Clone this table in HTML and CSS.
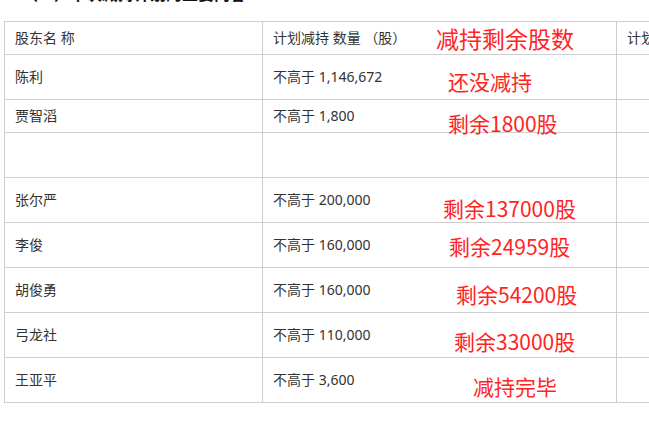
FILE: index.html
```html
<!DOCTYPE html>
<html lang="zh-CN">
<head>
<meta charset="utf-8">
<title>减持计划</title>
<link rel="stylesheet" href="styles.css">
</head>
<body>
<div class="page">
  <div class="title">（一）本次减持计划的主要内容</div>
  <table class="grid">
    <colgroup>
      <col class="c-name">
      <col class="c-amt">
      <col class="c-more">
    </colgroup>
    <tr class="row-head">
      <td>股东名 称</td>
      <td class="amt">计划减持 数量 （股）<span class="note note-big n-head">减持剩余股数</span></td>
      <td>计划减持期间</td>
    </tr>
    <tr class="row">
      <td>陈利</td>
      <td class="amt">不高于 1,146,672<span class="note n1">还没减持</span></td>
      <td></td>
    </tr>
    <tr class="row-short">
      <td>贾智滔</td>
      <td class="amt">不高于 1,800<span class="note n2">剩余1800股</span></td>
      <td></td>
    </tr>
    <tr class="row">
      <td></td>
      <td></td>
      <td></td>
    </tr>
    <tr class="row">
      <td>张尔严</td>
      <td class="amt">不高于 200,000<span class="note n4">剩余137000股</span></td>
      <td></td>
    </tr>
    <tr class="row">
      <td>李俊</td>
      <td class="amt">不高于 160,000<span class="note n5">剩余24959股</span></td>
      <td></td>
    </tr>
    <tr class="row">
      <td>胡俊勇</td>
      <td class="amt">不高于 160,000<span class="note n6">剩余54200股</span></td>
      <td></td>
    </tr>
    <tr class="row">
      <td>弓龙社</td>
      <td class="amt">不高于 110,000<span class="note n7">剩余33000股</span></td>
      <td></td>
    </tr>
    <tr class="row">
      <td>王亚平</td>
      <td class="amt">不高于 3,600<span class="note n8">减持完毕</span></td>
      <td></td>
    </tr>
  </table>
</div>
</body>
</html>
```

FILE: styles.css
```css
html, body {
  margin: 0;
  padding: 0;
  background: #ffffff;
  overflow: hidden;
}

.page {
  width: 720px;
  padding-left: 4px;
  font-family: "Noto Sans", "Noto Sans CJK SC", sans-serif;
  color: #333333;
}

.title {
  font-family: "Noto Sans CJK SC", sans-serif;
  font-size: 16px;
  font-weight: 700;
  line-height: 16px;
  height: 16px;
  margin-top: -15px;
  margin-left: 18px;
  margin-bottom: 20px;
  color: #111111;
  white-space: nowrap;
}

.grid {
  border-collapse: collapse;
  width: 716px;
  table-layout: fixed;
}

.c-name { width: 258px; }
.c-amt { width: 354px; }

.grid td {
  border: 1px solid #cfcfcf;
  padding: 0 0 0 10px;
  font-size: 14px;
  line-height: 18px;
  vertical-align: middle;
  white-space: nowrap;
  position: relative;
}

.row-head td { height: 32px; }
.row td { height: 44px; }
.row-short td { height: 32px; }

.note {
  position: absolute;
  font-family: "Noto Sans CJK SC", sans-serif;
  color: #ff2424;
  font-size: 21px;
  line-height: 28px;
  white-space: nowrap;
}

.note-big {
  font-size: 23px;
  line-height: 30px;
}

.n-head { left: 173px; top: 1px; }
.n1 { left: 185px; top: 12px; }
.n2 { left: 185px; top: 9px; }
.n4 { left: 180px; top: 16px; }
.n5 { left: 186px; top: 9px; }
.n6 { left: 193px; top: 12px; }
.n7 { left: 191px; top: 14px; }
.n8 { left: 210px; top: 14px; }
```
